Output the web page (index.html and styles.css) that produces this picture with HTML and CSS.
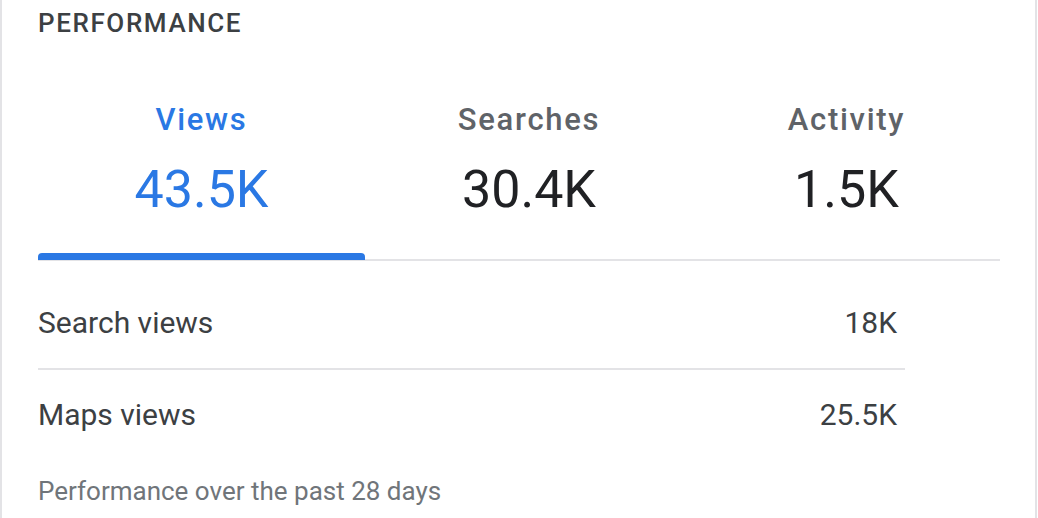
FILE: index.html
```html
<!DOCTYPE html>
<html lang="en">
<head>
<meta charset="utf-8">
<title>Performance</title>
<link rel="stylesheet" href="styles.css">
</head>
<body>
<section class="card">
  <h2 class="title">PERFORMANCE</h2>
  <div class="tabs">
    <div class="tab active">
      <div class="tab-label">Views</div>
      <div class="tab-value">43.5K</div>
    </div>
    <div class="tab">
      <div class="tab-label">Searches</div>
      <div class="tab-value">30.4K</div>
    </div>
    <div class="tab">
      <div class="tab-label">Activity</div>
      <div class="tab-value">1.5K</div>
    </div>
  </div>
  <div class="rows">
    <div class="row">
      <span class="row-name">Search views</span>
      <span class="row-value">18K</span>
    </div>
    <div class="row">
      <span class="row-name">Maps views</span>
      <span class="row-value">25.5K</span>
    </div>
  </div>
  <p class="footer">Performance over the past 28 days</p>
</section>
</body>
</html>
```

FILE: styles.css
```css
* { box-sizing: border-box; }

html, body {
  margin: 0;
  padding: 0;
  background: #ffffff;
}

body {
  font-family: Roboto, "Liberation Sans", Arial, sans-serif;
  color: #3c4043;
}

.card {
  width: 1037px;
  height: 518px;
  border-left: 2px solid #e3e3e6;
  border-right: 2px solid #e3e3e6;
  padding: 8px 0 0 36px;
  overflow: hidden;
}

.title {
  margin: 0;
  font-size: 26px;
  line-height: 30px;
  font-weight: 500;
  letter-spacing: 1.6px;
  color: #3c4043;
}

.tabs {
  width: 962px;
  margin-top: 64px;
  display: grid;
  grid-template-columns: 327px 328px 1fr;
  border-bottom: 2px solid #e3e3e6;
}

.tab {
  position: relative;
  text-align: center;
  padding-bottom: 39px;
}

.tab-label {
  font-size: 31px;
  line-height: 36px;
  font-weight: 500;
  color: #5f6368;
  letter-spacing: 1.7px;
}

.tab-value {
  margin-top: 22px;
  font-size: 52px;
  line-height: 60px;
  font-weight: 400;
  color: #202124;
}

.tab.active .tab-label,
.tab.active .tab-value {
  color: #2a78e4;
}

.tab.active::after {
  content: "";
  position: absolute;
  left: 0;
  right: 0;
  bottom: -1px;
  height: 7px;
  border-radius: 4px 4px 0 0;
  background: #2a78e4;
}

.rows {
  width: 867px;
  margin-top: 17px;
}

.row {
  display: flex;
  justify-content: space-between;
  padding: 27px 8px 27px 0;
  font-size: 30px;
  line-height: 36px;
  color: #3c4043;
}

.row + .row {
  border-top: 2px solid #e3e3e6;
}

.footer {
  margin: 16px 0 0;
  font-size: 26px;
  line-height: 30px;
  color: #70757a;
}
```
